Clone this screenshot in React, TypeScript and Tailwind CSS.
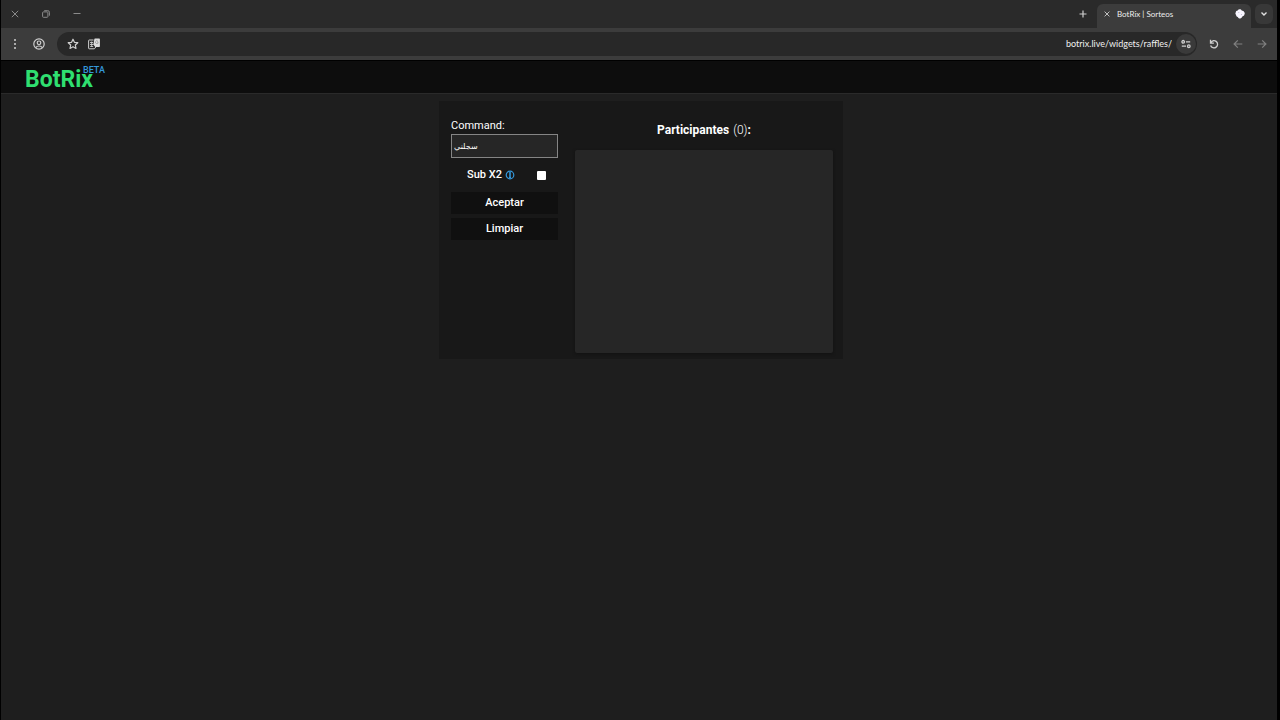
import { useState } from "react";

function CloseIcon({ className }: { className: string }) {
  return (
    <svg viewBox="0 0 8 8" className={className} fill="none" stroke="currentColor" aria-hidden="true">
      <path d="M0.8 0.8l6.400 6.400M7.200 0.800L0.800 7.200" />
    </svg>
  );
}

function TitleBar() {
  return (
    <div className="flex h-7 items-stretch justify-between bg-[#2a2a2a]">
      <div className="flex items-center gap-[19px] pl-2 text-[#8a8a8a]">
        <button type="button" aria-label="Close window" className="flex w-3 justify-center">
          <CloseIcon className="size-2" />
        </button>
        <button type="button" aria-label="Restore window" className="flex w-3 justify-center">
          <svg viewBox="0 0 8 8" className="size-2" fill="none" stroke="currentColor" strokeWidth="1" aria-hidden="true">
            <rect x="0.600" y="1.900" width="5.300" height="5.400" rx="0.800" />
            <path d="M2.200 0.700h3.600a1.600 1.600 0 0 1 1.600 1.600v3.400" />
          </svg>
        </button>
        <button type="button" aria-label="Minimize window" className="flex w-3 justify-center">
          <svg viewBox="0 0 8 8" className="size-2" stroke="currentColor" aria-hidden="true">
            <path d="M0.500 3.500h7" />
          </svg>
        </button>
      </div>
      <div className="flex items-stretch">
        <button type="button" aria-label="New tab" className="flex w-7 items-center justify-center text-[#cfcfcf]">
          <svg viewBox="0 0 8 8" className="size-2" stroke="currentColor" strokeWidth="1.200" aria-hidden="true">
            <path d="M4 0.500v7M0.500 4h7" />
          </svg>
        </button>
        <div className="mt-1 flex w-[154px] items-center rounded-t-md bg-[#3c3c3c] px-[6px] pb-1 text-[#ececec]">
          <button type="button" aria-label="Close tab" className="flex size-2 items-center justify-center">
            <CloseIcon className="size-[6px]" />
          </button>
          <span className="ml-[6px] grow text-[8px] leading-3">BotRix | Sorteos</span>
          <svg viewBox="0 0 10 10" className="size-[10px]" aria-hidden="true">
            <path d="M4.600 0.300c1.200 0 1.700 0.600 2.100 1.100 1 0.100 2.100 0.500 2.400 1.500 0.700 0.700 0.900 1.700 0.300 2.600-0.200 1-0.900 1.600-1.800 1.800C7 8.500 6.200 9.500 5.200 9.600 4 9.600 3.400 8.900 2.800 8 1.700 7.800 1.100 7 1.100 6 0.300 5.300 0.200 4.200 0.800 3.300 0.900 2.200 1.600 1.600 2.700 1.500 3.100 0.700 3.800 0.300 4.600 0.300Z" fill="#f8f6ff" />
            <circle cx="3.800" cy="3.600" r="0.500" fill="#b4aecb" />
            <circle cx="6.400" cy="5.500" r="0.500" fill="#b4aecb" />
          </svg>
        </div>
        <button
          type="button"
          aria-label="Search tabs"
          className="my-1 mr-1 ml-1 flex w-[18px] items-center justify-center rounded-md bg-[#383838] text-[#e0e0e0]"
        >
          <svg viewBox="0 0 8 8" className="size-2" fill="none" stroke="currentColor" strokeWidth="1.400" aria-hidden="true">
            <path d="M1.500 2.500L4 5l2.500-2.500" />
          </svg>
        </button>
      </div>
    </div>
  );
}

function AddressBar() {
  return (
    <div className="flex h-8 items-center bg-[#3c3c3c] text-[#cfcfcf]">
      <button type="button" aria-label="Browser menu" className="ml-2 flex w-3 justify-center">
        <svg viewBox="0 0 4 12" className="h-3 w-1" fill="currentColor" aria-hidden="true">
          <circle cx="2" cy="2" r="1" />
          <circle cx="2" cy="6" r="1" />
          <circle cx="2" cy="10" r="1" />
        </svg>
      </button>
      <button type="button" aria-label="Profile" className="ml-3 flex w-3 justify-center">
        <svg viewBox="0 0 12 12" className="size-3" fill="none" stroke="currentColor" strokeWidth="1.200" aria-hidden="true">
          <circle cx="6" cy="6" r="5.200" />
          <circle cx="6" cy="4.800" r="1.800" />
          <path d="M2.700 9.600c0.800-1.100 2-1.600 3.300-1.600s2.500 0.500 3.300 1.600" />
        </svg>
      </button>
      <div className="ml-3 flex h-6 grow items-center rounded-full bg-[#282828] pl-2">
        <button type="button" aria-label="Bookmark this page" className="flex w-4 justify-center">
          <svg viewBox="0 0 12 12" className="size-3" fill="none" stroke="currentColor" strokeWidth="1.200" strokeLinejoin="round" aria-hidden="true">
            <path d="M6 1.200l1.400 3.100 3.400 0.400-2.500 2.300 0.700 3.400L6 8.700l-3 1.700 0.700-3.400L1.200 4.700l3.400-0.400z" />
          </svg>
        </button>
        <button type="button" aria-label="Translate this page" className="ml-[5px] flex w-4 justify-center">
          <svg viewBox="0 0 12 12" className="size-3" aria-hidden="true">
            <path d="M5.500 2H1.200a0.600 0.600 0 0 0-0.600 0.600v7.600a0.600 0.600 0 0 0 0.600 0.600h5.200L8 8.800" fill="none" stroke="currentColor" />
            <path d="M2 4.500h3M2 6.500h3.500M2.200 8.500h3M3.700 3.500v5" stroke="currentColor" strokeWidth="0.900" />
            <path d="M7 0.500h4.200a0.700 0.700 0 0 1 0.700 0.700v7a0.700 0.700 0 0 1-0.700 0.700H7.200L5.400 6.500 6.300 1.200A0.700 0.700 0 0 1 7 0.500Z" fill="#dcdcdc" />
            <path d="M10.200 4H9M10.300 4.300a1.400 1.400 0 1 1-0.500-1.200" fill="none" stroke="#888" strokeWidth="0.700" />
          </svg>
        </button>
        <input
          type="text"
          aria-label="Address"
          defaultValue="botrix.live/widgets/raffles/"
          className="min-w-0 grow bg-transparent pr-1 text-right text-[9px] leading-4 text-[#f0f0f0] outline-none"
        />
        <button type="button" aria-label="Site information" className="mr-px flex size-5 items-center justify-center rounded-full bg-[#3a3a3a]">
          <svg viewBox="0 0 10 10" className="size-[10px]" fill="none" stroke="currentColor" strokeWidth="1.300" aria-hidden="true">
            <circle cx="2.200" cy="2.800" r="1.300" />
            <path d="M5 2.800h4.200M0.800 7.200H5" />
            <circle cx="7.800" cy="7.200" r="1.300" />
          </svg>
        </button>
      </div>
      <div className="flex items-center gap-3 pr-[9px] pl-[11px]">
        <button type="button" aria-label="Reload" className="flex w-3 justify-center">
          <svg viewBox="0 0 10 10" className="size-[10px]" fill="none" stroke="currentColor" strokeWidth="1.300" aria-hidden="true">
            <path d="M1.500 0.800v3.400h3.400M1.600 4A3.600 3.600 0 1 1 1.600 6.500M1.600 4C2.300 2.600 3.500 1.700 5 1.700" />
          </svg>
        </button>
        <button type="button" aria-label="Back" className="flex w-3 justify-center text-[#808080]">
          <svg viewBox="0 0 10 10" className="size-[10px]" fill="none" stroke="currentColor" strokeWidth="1.200" aria-hidden="true">
            <path d="M9.300 5H1.200M4.800 1.300L1.100 5l3.700 3.700" />
          </svg>
        </button>
        <button type="button" aria-label="Forward" className="flex w-3 justify-center text-[#808080]">
          <svg viewBox="0 0 10 10" className="size-[10px]" fill="none" stroke="currentColor" strokeWidth="1.200" aria-hidden="true">
            <path d="M0.700 5h8.100M5.200 1.300L8.900 5 5.200 8.700" />
          </svg>
        </button>
      </div>
    </div>
  );
}

function RafflePanel() {
  const [command, setCommand] = useState("سجلني");
  const [doubled, setDoubled] = useState(false);
  return (
    <section className="mx-auto flex w-[404px] gap-[17px] bg-[#181818] pr-[10px] pb-[6px] pl-3 text-white">
      <form className="flex w-[107px] shrink-0 flex-col pt-[17px]" onSubmit={(event) => event.preventDefault()}>
        <label htmlFor="command" className="text-[11px] leading-4">
          Command:
        </label>
        <input
          id="command"
          type="text"
          value={command}
          onChange={(event) => setCommand(event.target.value)}
          className="h-6 w-full border border-[#858585] bg-[#262626] px-[2px] font-['DejaVu_Sans','Noto_Sans',sans-serif] text-[8px] outline-none"
        />
        <div className="flex h-[34px] items-center justify-between pr-3 pl-4 font-medium">
          <label htmlFor="double" className="flex items-center gap-[3px] text-[11px] leading-4">
            Sub X2
            <svg viewBox="0 0 10 10" className="size-[10px] text-[#3498db]" fill="none" stroke="currentColor" aria-hidden="true">
              <circle cx="5" cy="5" r="3.800" strokeWidth="1.200" />
              <path d="M5 2v6" strokeWidth="1.600" />
              <path d="M4 7.500h2" />
            </svg>
          </label>
          <input
            id="double"
            type="checkbox"
            checked={doubled}
            onChange={(event) => setDoubled(event.target.checked)}
            className="size-[9px] appearance-none rounded-[1px] bg-white checked:bg-[#3498db]"
          />
        </div>
        <div className="flex flex-col gap-1">
          <button type="submit" className="h-[22px] bg-[#101010] text-[11px] leading-4 font-medium">
            Aceptar
          </button>
          <button type="button" onClick={() => setCommand("")} className="h-[22px] bg-[#101010] text-[11px] leading-4 font-medium">
            Limpiar
          </button>
        </div>
      </form>
      <div className="flex grow flex-col">
        <h2 className="flex h-[49px] items-center justify-center gap-1 pt-2 text-[12px] leading-4 font-bold">
          Participantes
          <span>
            <span className="font-light">(0)</span>:
          </span>
        </h2>
        <ul aria-label="Participantes" className="h-[203px] rounded-xs bg-[#262626] shadow-[0_1px_3px_#121212]" />
      </div>
    </section>
  );
}

export default function App() {
  return (
    <div className="flex min-h-screen bg-black pr-[3px] pl-px font-[Roboto,sans-serif]">
      <div className="flex min-w-0 grow flex-col bg-[#1e1e1e]">
        <div className="font-[Lato,sans-serif]">
          <TitleBar />
          <AddressBar />
        </div>
        <header className="flex h-[34px] items-start border-t border-b border-t-black border-b-[#2a2a2a] bg-[#0d0d0d] pl-6">
          <a href="#" className="flex items-start">
            <span className="pt-[5px] text-[23px] leading-7 font-bold text-[#2fdf70]">BotRix</span>
            <sup className="top-0 -ml-[10px] pt-[3px] text-[9px] leading-3 font-medium text-[#3498db]">BETA</sup>
          </a>
        </header>
        <main className="pt-[7px] pl-1">
          <RafflePanel />
        </main>
      </div>
    </div>
  );
}
